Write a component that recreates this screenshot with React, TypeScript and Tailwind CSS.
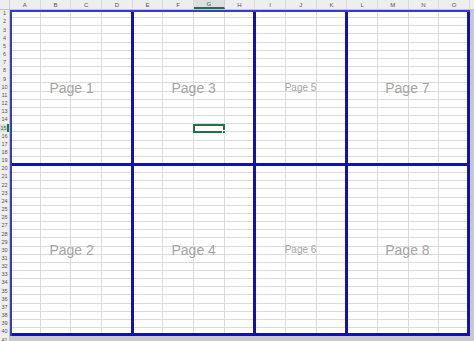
import React from "react";

const COLS = ["A", "B", "C", "D", "E", "F", "G", "H", "I", "J", "K", "L", "M", "N", "O"];
const ROWS = Array.from({ length: 40 }, (_, i) => i + 1);

const pages = [
  { label: "Page 1", small: false },
  { label: "Page 3", small: false },
  { label: "Page 5", small: true },
  { label: "Page 7", small: false },
  { label: "Page 2", small: false },
  { label: "Page 4", small: false },
  { label: "Page 6", small: true },
  { label: "Page 8", small: false },
];

const App = () => {
  return (
    <div className="w-[474px] h-[341px] overflow-hidden bg-[#c9c9c9] font-['Liberation_Sans',Arial,sans-serif] select-none">
      {/* column headers */}
      <div className="flex h-[10px] bg-[#eeeeee] border-b border-[#c4c4c4]">
        <div className="w-[10px] shrink-0 border-r border-[#d0d0d0]"></div>
        {COLS.map((c) => (
          <div
            key={c}
            className={
              c === "G"
                ? "w-[30.6667px] shrink-0 flex items-center justify-center text-[6px] leading-none text-[#217346] bg-[#dedede] border-r border-[#d0d0d0] border-b-2 border-b-[#217346]"
                : "w-[30.6667px] shrink-0 flex items-center justify-center text-[6px] leading-none text-[#555] border-r border-[#d8d8d8]"
            }
          >
            {c}
          </div>
        ))}
        <div className="flex-1"></div>
      </div>

      <div className="flex">
        {/* row headers */}
        <div className="w-[10px] shrink-0 bg-[#eeeeee] border-r border-[#c4c4c4] grid grid-rows-[repeat(40,8.1625px)]">
          {ROWS.map((r) => (
            <div
              key={r}
              className={
                r === 15
                  ? "flex items-center justify-center text-[5.5px] leading-none text-[#217346] bg-[#dedede] border-r-2 border-[#217346]"
                  : "flex items-center justify-center text-[5.5px] leading-none text-[#555]"
              }
            >
              {r}
            </div>
          ))}
        </div>

        {/* sheet */}
        <div className="relative w-[460px] shrink-0 bg-white">
          <div className="grid grid-cols-[repeat(15,30.6667px)] grid-rows-[repeat(40,8.1625px)]">
            {ROWS.map((r) =>
              COLS.map((c) => (
                <div key={c + r} className="border-r border-b border-[#dadada]"></div>
              ))
            )}
          </div>

          {/* page break overlay */}
          <div className="absolute inset-0 grid grid-cols-[4fr_4fr_3fr_4fr] grid-rows-[19fr_21fr] border-l-2 border-t-2 border-[#3a3ad0]">
            {pages.map((p) => (
              <div
                key={p.label}
                className="flex items-center justify-center border-[#1010c0] border-r-[3px] border-b-[3px]"
              >
                <span
                  className={
                    p.small
                      ? "text-[10px] text-[#a4a4a4] leading-none"
                      : "text-[14px] text-[#a4a4a4] leading-none"
                  }
                >
                  {p.label}
                </span>
              </div>
            ))}
          </div>

          {/* selected cell G15 */}
          <div className="absolute left-[183px] top-[113.5px] w-[32px] h-[9.5px] border-2 border-[#217346]">
            <div className="absolute -right-[3px] -bottom-[3px] w-[4px] h-[4px] bg-[#217346] border border-white"></div>
          </div>
        </div>
        <div className="flex-1"></div>
      </div>

      {/* row 41, outside print area */}
      <div className="flex h-[8px]">
        <div className="w-[10px] shrink-0 bg-[#eeeeee] border-r border-[#c4c4c4] text-[5.5px] leading-none text-[#555] flex items-center justify-center">
          41
        </div>
        <div className="flex-1 bg-[#c9c9c9]"></div>
      </div>
    </div>
  );
};

export default App;
